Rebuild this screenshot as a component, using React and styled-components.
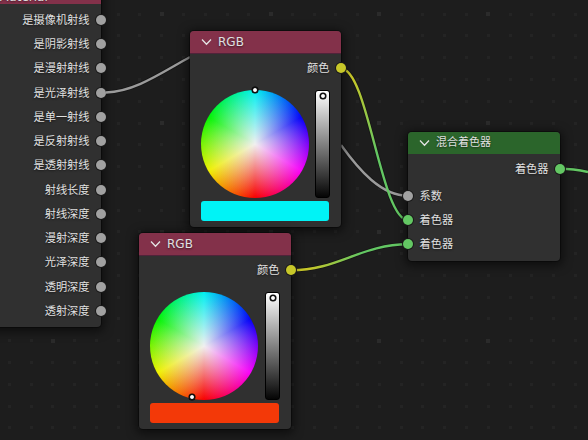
import React from "react";
import styled, { createGlobalStyle } from "styled-components";

const PageStyle = createGlobalStyle`
  *, *::before, *::after { box-sizing: border-box; }
  html, body { margin: 0; height: 100%; overflow: hidden; background: #1d1d1d; }
  #root { height: 100%; }
`;

const Editor = styled.main`
  position: relative;
  width: 588px;
  height: 440px;
  overflow: hidden;
  background: #1d1d1d;
  color: #e0e0e0;
  font: 11.2px/16px "DejaVu Sans", "Noto Sans CJK SC", sans-serif;
  text-shadow: 0 1px 2px rgba(0, 0, 0, 0.55);
`;

const Layer = styled.svg`
  position: absolute;
  inset: 0;
  width: 588px;
  height: 440px;
  pointer-events: none;
`;

/* Nodes sit on the free canvas at their own coordinates. */
const Node = styled.section`
  position: absolute;
  left: ${(p) => p.$x}px;
  top: ${(p) => p.$y}px;
  width: ${(p) => p.$w}px;
  height: ${(p) => p.$h}px;
  display: flex;
  flex-direction: column;
  background: #303030;
  border-radius: 4px;
  box-shadow: 0 0 0 1px rgba(0, 0, 0, 0.35), 0 2px 10px 3px rgba(0, 0, 0, 0.5);
`;

const Header = styled.header`
  flex: none;
  display: flex;
  align-items: center;
  gap: 6px;
  height: 21.5px;
  padding: 0 0 0 11px;
  border-radius: 4px 4px 0 0;
  background: ${(p) => p.$color};
  box-shadow: 0 1px 0 ${(p) => p.$edge || "transparent"};
`;

const Title = styled.span`
  font-size: ${(p) => p.$size || 12}px;
  padding-top: ${(p) => p.$drop || 0}px;
`;

const Chevron = styled.svg`
  width: 11px;
  height: 8px;
  fill: none;
  stroke: #e4e4e4;
  stroke-width: 1.3;
`;

const OutputList = styled.div`
  display: flex;
  flex-direction: column;
  padding-top: ${(p) => p.$top || 0}px;
`;

const Row = styled.div`
  flex: none;
  display: flex;
  align-items: center;
  justify-content: ${(p) => (p.$input ? "flex-start" : "flex-end")};
  gap: 6.5px;
  height: 24.25px;
  margin: ${(p) => (p.$input ? "0 0 0 -5px" : "0 -5px 0 0")};
`;

const Label = styled.span`
  padding-top: 2px;
`;

const Socket = styled.i`
  flex: none;
  width: 10px;
  height: 10px;
  border-radius: 50%;
  background: ${(p) => p.$color};
  box-shadow: 0 0 0 1px #1a1a1a;
`;

const Picker = styled.div`
  display: flex;
  justify-content: space-between;
  height: 108px;
  padding: 0 11px 0 11px;
  margin-top: 9.5px;
`;

const Wheel = styled.div`
  position: relative;
  width: 108px;
  height: 108px;
  border-radius: 50%;
  background:
    radial-gradient(circle closest-side, #f0f0f0 0%, rgba(240, 240, 240, 0) 100%),
    conic-gradient(#00f0f0, #0000f8 60deg, #f800f8 120deg, #f80000 180deg, #f0f000 240deg, #00f400 300deg, #00f0f0);
`;

const Knob = styled.i`
  position: absolute;
  left: ${(p) => p.$x - 3}px;
  top: ${(p) => p.$y - 3}px;
  width: 6px;
  height: 6px;
  border-radius: 50%;
  border: 1px solid #000;
  background: #fff;
  box-shadow: 0 0 0 0.5px #000;
`;

const ValueBar = styled.div`
  position: relative;
  width: 15px;
  height: 108px;
  border: 1px solid #000;
  border-radius: 3px;
  background: linear-gradient(#fff, #050505);
`;

const Swatch = styled.div`
  height: 20px;
  margin: 3px 12px 0 11px;
  border-radius: 3px;
  background: ${(p) => p.$color};
`;

const outputs = [
  "是摄像机射线", "是阴影射线", "是漫射射线", "是光泽射线", "是单一射线", "是反射射线", "是透射射线",
  "射线长度", "射线深度", "漫射深度", "光泽深度", "透明深度", "透射深度",
];

const wires = [
  { d: "M106 92.5C135 91.5 161 73 190 57", stroke: "#9b9b9b" },
  { d: "M341 145C359 170 381 195.8 408 195.8", stroke: "#9b9b9b" },
  { d: "M341 68.5C368 68.5 381 220 408 220", stroke: "url(#wireA)" },
  { d: "M291 270.3C338 270.3 361 244.3 408 244.3", stroke: "url(#wireB)" },
  { d: "M560 168.7C570 168.7 579 170 588 172", stroke: "#63c763" },
];

const STEP = 21.77;
const gridDots = [];
for (let r = 0; r < 21; r += 1) {
  for (let c = 0; c < 28; c += 1) {
    const major = r % 5 === 0 && (c + 3) % 5 === 0;
    const half = major ? 2 : 1.5;
    gridDots.push({
      key: `${r}-${c}`,
      x: Math.round(9.35 + c * STEP - half),
      y: Math.round(14.2 + r * STEP - half),
      size: half * 2,
      major,
    });
  }
}

function Toggle() {
  return (
    <Chevron viewBox="0 0 11 8"><path d="M1 1.5 5.5 6.2 10 1.5" /></Chevron>
  );
}

function ColorNode({ x, y, w, knob, color }) {
  return (
    <Node $x={x} $y={y} $w={w} $h={196}>
      <Header $color="#83314a" $edge="#50233a"><Toggle /><Title>RGB</Title></Header>
      <OutputList $top={3.6}>
        <Row><Label>颜色</Label><Socket $color="#c7c729" /></Row>
      </OutputList>
      <Picker>
        <Wheel><Knob $x={knob[0]} $y={knob[1]} /></Wheel>
        <ValueBar><Knob $x={6.5} $y={5} /></ValueBar>
      </Picker>
      <Swatch $color={color} />
    </Node>
  );
}

export default function App() {
  return (
    <Editor>
      <PageStyle />
      <Layer viewBox="0 0 588 440">
        {gridDots.map((d) => (
          <rect key={d.key} x={d.x} y={d.y} width={d.size} height={d.size} fill={d.major ? "#2b2b2b" : "#242424"} />
        ))}
      </Layer>

      <Node $x={-29} $y={-17.5} $w={130} $h={344.8}>
        <Header $color="#83314a"><Toggle /><Title $drop={7}>Material</Title></Header>
        <OutputList $top={3.8}>
          {outputs.map((name) => (
            <Row key={name}><Label>{name}</Label><Socket $color="#a1a1a1" /></Row>
          ))}
        </OutputList>
      </Node>

      <Layer viewBox="0 0 588 440" fill="none">
        <defs>
          <linearGradient id="wireA" gradientUnits="userSpaceOnUse" x1="341" y1="68" x2="408" y2="220">
            <stop offset="0.08" stopColor="#c7c729" /><stop offset="0.56" stopColor="#63c763" />
          </linearGradient>
          <linearGradient id="wireB" gradientUnits="userSpaceOnUse" x1="291" y1="270" x2="408" y2="244">
            <stop offset="0.15" stopColor="#c7c729" /><stop offset="0.6" stopColor="#63c763" />
          </linearGradient>
        </defs>
        <g stroke="#151515" strokeWidth="4">
          {wires.map((w) => <path key={w.d} d={w.d} />)}
        </g>
        <g strokeWidth="2.4">
          {wires.map((w) => <path key={w.d} d={w.d} stroke={w.stroke} />)}
        </g>
      </Layer>

      <ColorNode x={190} y={31} w={151} knob={[54, 0]} color="#00f3f6" />
      <ColorNode x={139} y={233} w={152} knob={[42, 105]} color="#f33908" />

      <Node $x={408} $y={132} $w={152} $h={128.5}>
        <Header $color="#2b652b"><Toggle /><Title $size={11}>混合着色器</Title></Header>
        <OutputList $top={3.2}>
          <Row><Label>着色器</Label><Socket $color="#63c763" /></Row>
        </OutputList>
        <OutputList $top={2.8}>
          <Row $input><Socket $color="#a1a1a1" /><Label>系数</Label></Row>
          <Row $input><Socket $color="#63c763" /><Label>着色器</Label></Row>
          <Row $input><Socket $color="#63c763" /><Label>着色器</Label></Row>
        </OutputList>
      </Node>
    </Editor>
  );
}
